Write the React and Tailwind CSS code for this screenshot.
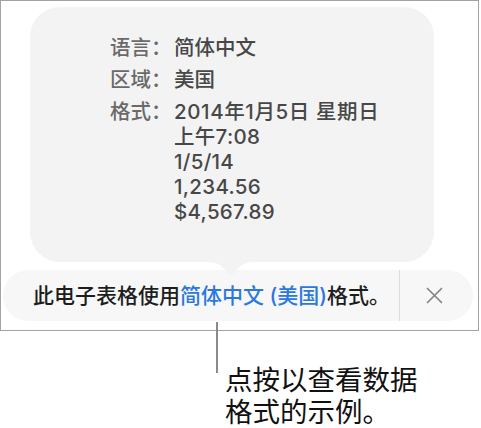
export default function App() {
  const font = { fontFamily: 'Inter, "Noto Sans CJK SC", sans-serif' };
  return (
    <div className="w-[481px] h-[428px] bg-white overflow-hidden" style={font}>
      <div className="w-[479px] h-[331px] border border-[#a3a3a3] flex flex-col">
        <div className="relative ml-[29px] mt-[6px] w-[404px] h-[255px] rounded-[30px] bg-[#f3f3f3] pl-[80px] pt-[28px] text-[20.5px] leading-[25px] font-medium text-[#474747]">
          <div className="grid grid-cols-[64px_1fr] gap-y-[7px]">
            <div className="text-[#6a6a6a]">语言：</div>
            <div>简体中文</div>
            <div className="text-[#6a6a6a]">区域：</div>
            <div>美国</div>
            <div className="text-[#6a6a6a]">格式：</div>
            <div className="flex flex-col">
              <span className="tracking-[0.6px]">2014年1月5日 星期日</span>
              <span className="tracking-[0.3px]">上午7:08</span>
              <span className="tracking-[0.3px]">1/5/14</span>
              <span className="tracking-[0.3px]">1,234.56</span>
              <span className="tracking-[0.3px]">$4,567.89</span>
            </div>
          </div>
          <svg
            className="absolute top-full left-[179px] z-10"
            width="44"
            height="16"
            viewBox="0 0 44 16"
          >
            <path d="M0 0 C8 0 13 4 17 9 Q22 16 27 9 C31 4 36 0 44 0 Z" fill="#f3f3f3" />
          </svg>
        </div>
        <div className="ml-[2px] mt-[8px] w-[470px] h-[51px] rounded-full bg-[#f7f7f7] flex items-center">
          <div className="pl-[30px] w-[396px] text-[21px] font-medium text-[#1d1d1d] whitespace-nowrap">
            此电子表格使用<span className="text-[#2a78e0]">简体中文 (美国)</span>格式。
          </div>
          <div className="w-px self-stretch bg-[#dcdcdc]"></div>
          <div className="flex-1 flex items-center justify-center pr-[4px]">
            <svg width="17" height="17" viewBox="0 0 17 17">
              <path d="M1.5 1.5 L15.5 15.5 M15.5 1.5 L1.5 15.5" stroke="#858585" strokeWidth="1.7" strokeLinecap="round" />
            </svg>
          </div>
        </div>
      </div>
      <div className="-mt-[9px] flex">
        <div className="ml-[216px] w-[2px] h-[51px] bg-[#8a8a8a]"></div>
        <div className="ml-[7px] mt-[40px] text-[27.5px] leading-[32px] text-[#111]" style={{ fontFamily: '"Noto Sans CJK SC", sans-serif' }}>
          <div>点按以查看数据</div>
          <div>格式的示例。</div>
        </div>
      </div>
    </div>
  );
}
